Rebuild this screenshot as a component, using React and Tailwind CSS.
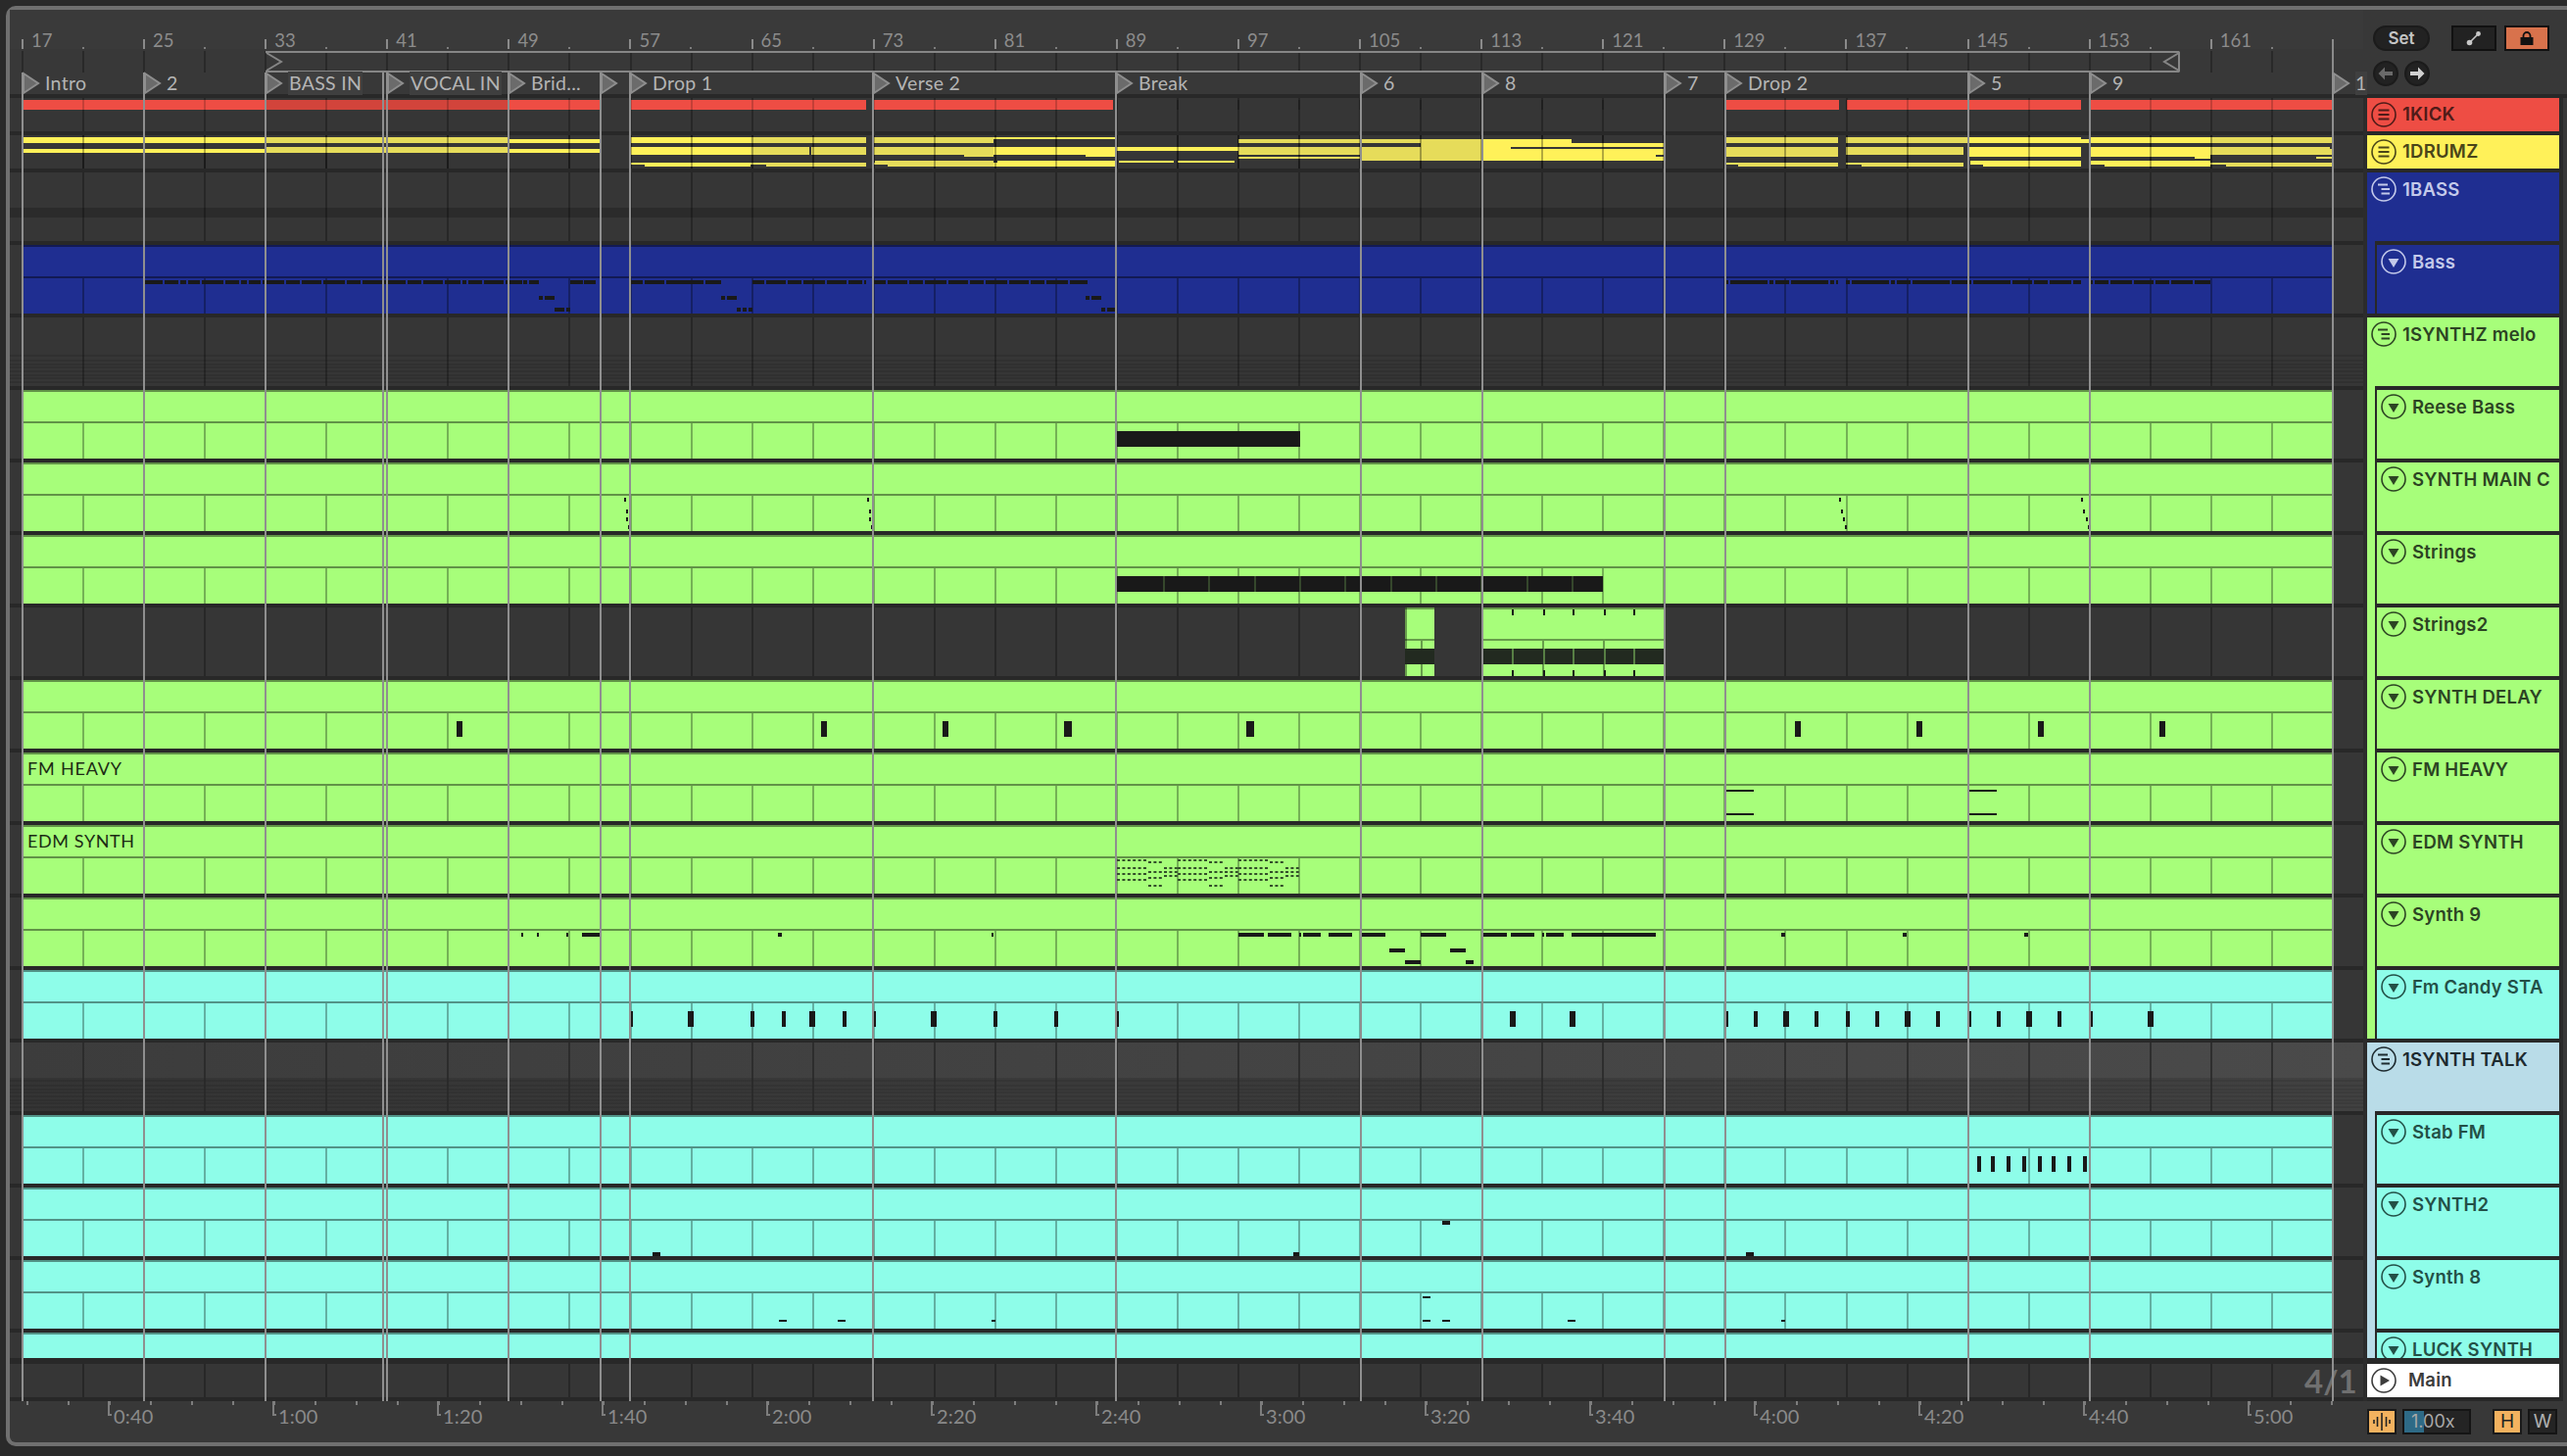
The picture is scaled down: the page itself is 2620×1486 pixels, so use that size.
import { Fragment } from "react";

const BAR = 62.05;
const gridXs = Array.from({ length: 38 }, (_, i) => Math.round(23 + BAR * i));
const locators = [
  { x: 23, name: "Intro" },
  { x: 147, name: "2" },
  { x: 271, name: "BASS IN", tint: true },
  { x: 391, name: "", hidden: true },
  { x: 395, name: "VOCAL IN", tint: true },
  { x: 519, name: "Brid..." },
  { x: 613, name: "" },
  { x: 643, name: "Drop 1" },
  { x: 891, name: "Verse 2" },
  { x: 1139, name: "Break" },
  { x: 1389, name: "6" },
  { x: 1513, name: "8" },
  { x: 1699, name: "7" },
  { x: 1761, name: "Drop 2" },
  { x: 2009, name: "5" },
  { x: 2133, name: "9" },
  { x: 2381, name: "1" },
];
const barLabels = [17, 25, 33, 41, 49, 57, 65, 73, 81, 89, 97, 105, 113, 121, 129, 137, 145, 153, 161];
const timeLabels = ["0:40", "1:00", "1:20", "1:40", "2:00", "2:20", "2:40", "3:00", "3:20", "3:40", "4:00", "4:20", "4:40", "5:00"];

// [x1, x2, y1, y2] in page pixels
const yellowBright = [
  [24, 271, 140, 146], [24, 271, 152, 156], [519, 612, 142, 146], [519, 612, 152, 156],
  [644, 766, 140, 146], [644, 766, 150, 158], [644, 658, 166, 168], [658, 766, 166, 170],
  [1014, 1139, 140, 142], [1014, 1139, 150, 158], [1108, 1139, 158, 160], [1014, 1030, 166, 170], [1018, 1139, 164, 166], [1030, 1139, 166, 170],
  [1139, 1264, 150, 154], [1142, 1198, 164, 166], [1202, 1260, 164, 166],
  [1513, 1604, 142, 164], [1604, 1699, 146, 164],
  [2010, 2124, 140, 146], [2010, 2124, 150, 160], [2011, 2024, 164, 168], [2024, 2124, 164, 170], [2124, 2133, 142, 146],
  [2134, 2256, 140, 146], [2134, 2240, 150, 160], [2240, 2256, 150, 162], [2134, 2148, 164, 168], [2148, 2256, 164, 170],
];
const yellowDim = [
  [271, 519, 140, 146], [271, 519, 150, 156],
  [766, 884, 140, 146], [766, 826, 150, 158], [828, 884, 150, 158], [766, 782, 166, 168], [782, 884, 166, 170],
  [891, 1014, 140, 146], [891, 984, 150, 158], [984, 1014, 150, 160], [891, 906, 166, 168], [893, 906, 164, 166], [906, 1014, 164, 170],
  [1264, 1389, 142, 146], [1264, 1389, 150, 158], [1264, 1389, 160, 162],
  [1390, 1450, 142, 146], [1390, 1450, 150, 164], [1450, 1513, 142, 164],
  [1761, 1876, 140, 146], [1761, 1876, 150, 160], [1761, 1774, 166, 168], [1774, 1876, 166, 170],
  [1884, 2009, 140, 146], [1884, 2004, 150, 158], [1884, 1900, 166, 168], [1900, 2004, 166, 170],
  [2256, 2380, 140, 146], [2256, 2378, 150, 158], [2256, 2272, 166, 168], [2272, 2380, 166, 170], [2364, 2380, 160, 162], [2378, 2380, 152, 158],
];
const yellowCuts = [[1542, 1698, 150, 152], [1690, 1699, 158, 160]];

// [x1, x2] for the three bass note rows
const bassHigh = [
  [148, 166], [168, 182], [184, 190], [192, 204], [206, 228], [230, 244], [246, 252], [254, 266], [268, 270], [272, 290], [292, 306], [308, 328],
  [330, 352], [354, 368], [370, 414], [416, 430], [432, 452], [454, 470], [472, 476], [478, 492], [494, 514], [516, 533], [534, 538], [540, 550],
  [582, 595], [596, 608], [644, 656], [658, 678], [680, 718], [720, 736], [768, 780], [782, 802], [804, 818], [820, 842], [844, 864], [866, 880],
  [882, 884], [892, 904], [906, 926], [928, 942], [944, 966], [968, 988], [990, 1004], [1006, 1028], [1030, 1050], [1052, 1066], [1068, 1090], [1092, 1110],
  [1762, 1764], [1766, 1804], [1806, 1810], [1812, 1826], [1828, 1866], [1868, 1872], [1874, 1876], [1884, 1888], [1890, 1928], [1930, 1934], [1936, 1950],
  [1952, 1990], [1992, 2012], [2014, 2052], [2054, 2074], [2076, 2090], [2092, 2114], [2116, 2124], [2134, 2136], [2138, 2152], [2154, 2176], [2178, 2198],
  [2200, 2214], [2216, 2238], [2240, 2256],
];
const bassMid = [[550, 554], [556, 566], [736, 740], [742, 752], [1108, 1112], [1114, 1124]];
const bassLow = [[566, 576], [578, 582], [752, 756], [758, 762], [764, 768], [1124, 1128], [1130, 1138]];

const synth9High = [
  [532, 534], [548, 550], [578, 580], [594, 612], [794, 798], [1012, 1014], [1264, 1290], [1294, 1318], [1326, 1328], [1330, 1348], [1356, 1380], [1390, 1414],
  [1450, 1476], [1514, 1538], [1542, 1566], [1574, 1576], [1578, 1596], [1604, 1690], [1818, 1822], [1942, 1946], [2066, 2070],
];
const candyNotes = [
  [644, 646], [702, 708], [766, 770], [798, 802], [826, 832], [860, 864], [892, 894], [950, 956], [1014, 1018], [1076, 1080], [1139, 1142], [1541, 1547], [1602, 1608],
  [1762, 1764], [1790, 1794], [1820, 1826], [1852, 1856], [1884, 1888], [1914, 1918], [1944, 1950], [1976, 1980], [2010, 2012], [2038, 2042], [2068, 2074], [2100, 2104], [2134, 2136], [2192, 2198],
];
const stabNotes = [[2018, 2022], [2032, 2036], [2048, 2052], [2064, 2068], [2080, 2084], [2094, 2098], [2110, 2114], [2126, 2130]];
const delayNotes = [[466, 472], [838, 844], [962, 968], [1086, 1094], [1272, 1280], [1832, 1838], [1956, 1962], [2080, 2086], [2204, 2210]];
const ticks = [1543, 1575, 1605, 1637, 1667];
const stringLines = Array.from({ length: 10 }, (_, i) => Math.round(1187 + 46.35 * i));
const stripes = [2, 7, 11, 14, 18, 22, 25, 29];

const Rects = ({ items, fill, opacity }) =>
  items.map(([a, b, c, d], i) => <rect key={i} x={a} y={c} width={b - a} height={d - c} fill={fill} opacity={opacity} />);

const Notes = ({ items, y1, y2 }) => <Rects items={items.map(([a, b]) => [a, b, y1, y2])} fill="#191919" />;

const Grid = ({ y, h, fill = "#272727", opacity }) =>
  gridXs.map((x) => <rect key={x} x={x - 1} y={y} width="2" height={h} fill={fill} opacity={opacity} />);

// one arrangement row, drawn in page coordinates
const Row = ({ y, h = 70, bg = "bg-[#363636]", children }) => (
  <div className={bg}>
    <svg className="block" width="2402" height={h} viewBox={`10 ${y} 2402 ${h}`}>
      {children}
    </svg>
  </div>
);

const Clip = ({ y, h = 70, fill, x1 = 24, x2 = 2380 }) => (
  <>
    <rect x={x1} y={y} width={x2 - x1} height={h} fill={fill} />
    <rect x={x1} y={y} width={x2 - x1} height="2" fill="#000" opacity="0.42" />
    {h > 34 && <rect x={x1} y={y + 32} width={x2 - x1} height="2" fill="#000" opacity="0.42" />}
    {h > 34 && gridXs.filter((x) => x > x1 && x < x2).map((x) => <rect key={x} x={x - 1} y={y + 34} width="2" height={h - 34} fill="#000" opacity="0.3" />)}
  </>
);

const Sep = ({ h = "h-1" }) => <div className={`${h} bg-[#282828]`} />;
const GREEN = "#a7fe7a";
const CYAN = "#8efde9";

const Timeline = () => (
  <div className="relative w-[2402px]">
    <div className="h-[86px] bg-[#383838] relative">
      <div className="h-[40px] bg-[#3a3a3a] flex items-end pl-[12px]">
        {barLabels.map((n) => (
          <div key={n} className="w-[124.1px] shrink-0 h-[22px] flex">
            <div className="w-[62px] h-full flex">
              <div className="w-[2px] h-[10px] mt-[12px] bg-[#8a8a8a]" />
              <span className="pl-[8px] pt-[1px] text-[18.5px] leading-[24px] text-[#8c8c8c]">{n}</span>
            </div>
            <div className="w-[2px] h-[2px] mt-[20px] bg-[#7d7d7d]" />
          </div>
        ))}
      </div>
      {/* loop brace and ruler ticks */}
      <svg className="absolute left-0 top-0" width="2402" height="86" viewBox="10 10 2402 86">
        <Rects items={gridXs.map((x) => [x - 1, x + 1, 52, 74])} fill="#292929" />
        <rect x="2380" y="40" width="2" height="34" fill="#8a8a8a" />
        <rect x="271" y="52" width="1953" height="2" fill="#868686" />
        <rect x="271" y="72" width="1953" height="2" fill="#868686" />
        <path d="M272 54 L287 63 L272 72" fill="none" stroke="#868686" strokeWidth="2" />
        <path d="M2224 54 L2209 63 L2224 72 Z" fill="none" stroke="#868686" strokeWidth="2" />
      </svg>
      {locators.map((l) => (
        <Fragment key={l.x}>
          {!l.hidden && (
            <svg className="absolute top-[63px]" style={{ left: l.x - 10 }} width="18" height="24" viewBox="0 0 18 24">
              <path d="M1 2 L16 12 L1 22 Z" fill="#6b6b6b" stroke="#8e8e8e" strokeWidth="2" />
            </svg>
          )}
          {l.name && (
            <span
              className={`absolute top-[63px] h-[24px] text-[19.5px] leading-[24px] tracking-[0.3px] text-[#b4b4b4] whitespace-nowrap ${l.tint ? "bg-[#3f3f3f] px-[1px]" : ""} ${l.name === "1" ? "bg-[#3f3f3f]" : ""}`}
              style={{ left: l.x - 10 + 23 }}
            >
              {l.name}
            </span>
          )}
        </Fragment>
      ))}
    </div>
    <Sep />

    <Row y={100} h={34}>
      <Grid y={100} h={34} />
      <Rects items={[[24, 612, 102, 112], [644, 884, 102, 112], [891, 1136, 102, 112], [1761, 1877, 102, 112], [1885, 2124, 102, 112], [2133, 2380, 102, 112]]} fill="#ee4d44" />
      <rect x="271" y="102" width="248" height="10" fill="#d2443b" />
      <Grid y={102} h={10} fill="#000" opacity="0.18" />
    </Row>
    <Sep />
    <Row y={138} h={34}>
      <Grid y={138} h={34} />
      <Rects items={yellowBright} fill="#fff159" />
      <Rects items={yellowDim} fill="#e6dc5a" />
      <Rects items={yellowCuts} fill="#363636" />
      <Grid y={138} h={34} fill="#000" opacity="0.3" />
    </Row>
    <Sep />
    <Row y={176}>
      <Grid y={176} h={70} />
      <rect x="10" y="212" width="2402" height="10" fill="#000" opacity="0.2" />
    </Row>
    <Sep />
    <Row y={250}>
      <Grid y={250} h={70} />
      <Clip y={250} fill="#1f2e91" />
      <Notes items={bassHigh} y1={286} y2={290} />
      <Notes items={bassMid} y1={302} y2={306} />
      <Notes items={bassLow} y1={314} y2={318} />
    </Row>
    <Sep />
    <Row y={324}>
      <Grid y={324} h={70} />
      {stripes.map((s) => (
        <rect key={s} x="10" y={360 + s} width="2402" height="2" fill="#000" opacity="0.1" />
      ))}
    </Row>
    <Sep />
    <Row y={398}>
      <Grid y={398} h={70} />
      <Clip y={398} fill={GREEN} />
      <Notes items={[[1140, 1327]]} y1={440} y2={456} />
    </Row>
    <Sep />
    <Row y={472}>
      <Grid y={472} h={70} />
      <Clip y={472} fill={GREEN} />
      {[[637, 639, 639, 641], [885, 887, 887, 889], [1877, 1879, 1881, 1883], [2124, 2126, 2129, 2131]].map((g) =>
        g.map((x, i) => <rect key={`${x}-${i}`} x={x} y={[508, 520, 528, 536][i]} width="2" height="4" fill="#191919" />)
      )}
    </Row>
    <Sep />
    <Row y={546}>
      <Grid y={546} h={70} />
      <Clip y={546} fill={GREEN} />
      <Notes items={[[1140, 1636]]} y1={588} y2={604} />
      {stringLines.map((x) => (
        <rect key={x} x={x} y="588" width="2" height="16" fill={GREEN} opacity="0.2" />
      ))}
    </Row>
    <Sep />
    <Row y={620}>
      <Grid y={620} h={70} />
      <rect x="1434" y="620" width="30" height="70" fill={GREEN} />
      <rect x="1513" y="620" width="185" height="70" fill={GREEN} />
      <Rects items={[[1434, 1464, 620, 622], [1513, 1698, 620, 622], [1434, 1464, 652, 654], [1513, 1698, 652, 654], [1434, 1436, 620, 690], [1450, 1452, 654, 690], [1574, 1576, 654, 690], [1636, 1638, 654, 690]]} fill="#000" opacity="0.38" />
      <Rects items={[[1434, 1464, 662, 678], [1513, 1698, 662, 678]]} fill="#222a20" />
      {ticks.map((x) => (
        <Fragment key={x}>
          <rect x={x} y="662" width="2" height="16" fill={GREEN} opacity="0.4" />
          <rect x={x} y="622" width="2" height="6" fill="#191919" />
          <rect x={x} y="684" width="2" height="6" fill="#191919" />
        </Fragment>
      ))}
    </Row>
    <Sep />
    <Row y={694}>
      <Clip y={694} fill={GREEN} />
      <Notes items={delayNotes} y1={736} y2={752} />
    </Row>
    <Sep />
    <Row y={768}>
      <Clip y={768} fill={GREEN} />
      <Notes items={[[1762, 1790], [2010, 2038]]} y1={806} y2={808} />
      <Notes items={[[1762, 1790], [2010, 2038]]} y1={830} y2={832} />
      <text x="28" y="791" fontSize="18" letterSpacing="0.8" fill="#1c2b14">FM HEAVY</text>
    </Row>
    <Sep />
    <Row y={842}>
      <Clip y={842} fill={GREEN} />
      {[1140, 1202, 1264].map((b) => (
        <Fragment key={b}>
          {[878, 886, 892, 898].map((y) => (
            <line key={y} x1={b} x2={b + 30} y1={y} y2={y} stroke="#33502a" strokeWidth="2" strokeDasharray="3 2.4" />
          ))}
          {[880, 890, 896, 904].map((y) => (
            <line key={y} x1={b + 32} x2={b + 46} y1={y} y2={y} stroke="#33502a" strokeWidth="2" strokeDasharray="3 2.4" />
          ))}
          {[886, 890, 894].map((y) => (
            <line key={y} x1={b + 48} x2={b + 62} y1={y} y2={y} stroke="#33502a" strokeWidth="2" strokeDasharray="3 2.4" />
          ))}
        </Fragment>
      ))}
      <text x="28" y="865" fontSize="18" letterSpacing="0.6" fill="#1c2b14">EDM SYNTH</text>
    </Row>
    <Sep />
    <Row y={916}>
      <Clip y={916} fill={GREEN} />
      <Notes items={synth9High} y1={952} y2={956} />
      <Notes items={[[1418, 1434], [1480, 1496]]} y1={968} y2={972} />
      <Notes items={[[1434, 1450], [1496, 1504]]} y1={980} y2={984} />
    </Row>
    <Sep />
    <Row y={990}>
      <Clip y={990} fill={CYAN} />
      <Notes items={candyNotes} y1={1032} y2={1048} />
    </Row>
    <Sep />
    <Row y={1064} bg="bg-gradient-to-r from-[#3c3c3c] to-[#4a4a4a]">
      <rect x="10" y="1100" width="2402" height="34" fill="#000" opacity="0.12" />
      {stripes.map((s) => (
        <rect key={s} x="10" y={1100 + s} width="2402" height="2" fill="#000" opacity="0.08" />
      ))}
      <Grid y={1064} h={70} fill="#282828" opacity="0.8" />
    </Row>
    <Sep />
    <Row y={1138}>
      <Clip y={1138} fill={CYAN} />
      <Notes items={stabNotes} y1={1180} y2={1196} />
    </Row>
    <Sep />
    <Row y={1212}>
      <Clip y={1212} fill={CYAN} />
      <Notes items={[[666, 674], [1320, 1326], [1782, 1790]]} y1={1278} y2={1282} />
      <Notes items={[[1472, 1480]]} y1={1246} y2={1250} />
    </Row>
    <Sep />
    <Row y={1286}>
      <Clip y={1286} fill={CYAN} />
      <Notes items={[[795, 803], [855, 863], [1012, 1016], [1452, 1460], [1472, 1480], [1600, 1608], [1818, 1822]]} y1={1347} y2={1349} />
      <Notes items={[[1452, 1460]]} y1={1323} y2={1325} />
    </Row>
    <Sep />
    <Row y={1360} h={26}>
      <rect x="24" y="1360" width="2356" height="26" fill={CYAN} />
      <rect x="24" y="1360" width="2356" height="2" fill="#000" opacity="0.42" />
    </Row>
    <Sep h="h-[6px]" />
    <div className="relative">
      <Row y={1392} h={34}>
        <Grid y={1392} h={34} />
      </Row>
      <span className="absolute left-[2342px] top-0 h-[34px] leading-[34px] text-[33px] font-bold text-[#707070]">4/1</span>
    </div>
    <Sep />

    {/* time ruler */}
    <div className="h-[42px] relative">
      <svg className="absolute left-0 top-0" width="2402" height="8" viewBox="10 1430 2402 8">
        {Array.from({ length: 57 }, (_, i) => (
          <rect key={i} x={27 + 42 * i} y="1430" width="2" height="4" fill="#7d7d7d" />
        ))}
      </svg>
      <div className="flex pl-[100px]">
        {timeLabels.map((t) => (
          <div key={t} className="w-[168px] shrink-0 flex">
            <div className="h-[15px] w-[4px] border-l-2 border-b-2 border-[#7d7d7d]" />
            <span className="pl-[2px] pt-[5px] text-[20px] leading-[20px] tracking-[0.2px] text-[#8a8a8a]">{t}</span>
          </div>
        ))}
      </div>
    </div>

    {/* locator lines lie over the clips */}
    <svg className="absolute left-0 top-[64px] pointer-events-none" width="2402" height="1356" viewBox="10 74 2402 1356">
      {locators.map((l) => (
        <rect key={l.x} x={l.x - 1} y="74" width="2" height="1356" fill="#8f8f8f" />
      ))}
    </svg>
  </div>
);

const FoldIcon = ({ kind }) => (
  <svg className="shrink-0" width="26" height="26" viewBox="0 0 26 26" fill="none">
    <circle cx="13" cy="13" r="12" stroke="currentColor" strokeWidth="1.6" />
    {kind === "lines" && (
      <path d="M7.500 8.500H18.500M7.500 13H18.500M7.500 17.500H18.500" stroke="currentColor" strokeWidth="2" />
    )}
    {kind === "group" && (
      <path d="M7 8.500H17M10.500 13H19M10.500 17.500H19" stroke="currentColor" strokeWidth="2" />
    )}
    {kind === "down" && <path d="M7.500 10H18.500L13 19Z" fill="currentColor" />}
    {kind === "play" && <path d="M9.500 7.500L19 13L9.500 18.500Z" fill="currentColor" />}
  </svg>
);

const NAME_FONT = "font-[Inter,sans-serif] text-[18.5px] font-semibold tracking-[0.25px] whitespace-nowrap";

const HeaderItem = ({ name, kind = "lines", className }) => (
  <div className={`h-[34px] flex items-center pl-[4px] gap-[6px] ${NAME_FONT} ${className}`}>
    <FoldIcon kind={kind} />
    <span>{name}</span>
  </div>
);

const GroupHead = ({ name, kind = "group", className = "" }) => (
  <div className={`flex pt-[4px] pl-[4px] gap-[6px] leading-[26px] ${NAME_FONT} ${className}`}>
    <FoldIcon kind={kind} />
    <span>{name}</span>
  </div>
);

const Child = ({ name, bg, text, h = "h-[70px]" }) => (
  <div className={`border-t-4 border-l-2 border-[#282828] ${bg} ${text} ${h} overflow-hidden`}>
    <div className={`flex pt-[4px] pl-[4px] gap-[6px] leading-[26px] ${NAME_FONT}`}>
      <FoldIcon kind="down" />
      <span>{name}</span>
    </div>
  </div>
);

const TrackList = () => (
  <div className="w-[196px] overflow-hidden">
    <HeaderItem name="1KICK" className="bg-[#ee4d44] text-[#4f1b18]" />
    <Sep />
    <HeaderItem name="1DRUMZ" className="bg-[#fff159] text-[#4a4519]" />
    <Sep />
    <div className="bg-[#1f2e91] text-[#c3c9ea]">
      <GroupHead name="1BASS" className="h-[70px]" />
      <div className="pl-[8px]">
        <Child name="Bass" bg="bg-[#1f2e91]" text="text-[#c3c9ea]" h="h-[74px]" />
      </div>
    </div>
    <Sep />
    <div className="bg-[#a7fe7a] text-[#2c4423]">
      <GroupHead name="1SYNTHZ melo" className="h-[70px]" />
      <div className="pl-[8px]">
        {["Reese Bass", "SYNTH MAIN C", "Strings", "Strings2", "SYNTH DELAY", "FM HEAVY", "EDM SYNTH", "Synth 9"].map((t) => (
          <Child key={t} name={t} bg="bg-[#a7fe7a]" text="text-[#2c4423]" h="h-[74px]" />
        ))}
        <Child name="Fm Candy STA" bg="bg-[#8efde9]" text="text-[#235047]" h="h-[74px]" />
      </div>
    </div>
    <Sep />
    <div className="bg-[#b9dce8] h-[322px] overflow-hidden">
      <GroupHead name="1SYNTH TALK" className="h-[70px] text-[#1d2a2f]" />
      <div className="pl-[8px]">
        {["Stab FM", "SYNTH2", "Synth 8"].map((t) => (
          <Child key={t} name={t} bg="bg-[#8efde9]" text="text-[#235047]" h="h-[74px]" />
        ))}
        <Child name="LUCK SYNTH" bg="bg-[#8efde9]" text="text-[#235047]" h="h-[30px]" />
      </div>
    </div>
    <Sep h="h-[6px]" />
    <div className={`h-[34px] bg-white flex items-center pl-[4px] gap-[12px] text-[#3c3c3c] ${NAME_FONT}`}>
      <FoldIcon kind="play" />
      <span>Main</span>
    </div>
    <Sep />
  </div>
);

const RightColumn = () => (
  <div className="w-[208px] shrink-0">
    <div className="h-[86px] pl-[10px] pt-[16px]">
      <div className="flex items-center">
        <div className="w-[58px] h-[26px] rounded-full bg-[#222] border-2 border-[#1b1b1b] text-[#c4c4c4] text-[17px] font-[Inter,sans-serif] font-semibold leading-[22px] text-center">Set</div>
        <div className="ml-[22px] w-[46px] h-[26px] bg-[#222] border-2 border-[#111] flex items-center justify-center">
          <svg width="16" height="16" viewBox="0 0 16 16">
            <path d="M3.500 12.500L12.500 3.500" stroke="#c8c8c8" strokeWidth="1.6" />
            <circle cx="3.500" cy="12.500" r="2.800" fill="#c8c8c8" />
            <circle cx="12.500" cy="3.500" r="2.400" fill="#c8c8c8" />
          </svg>
        </div>
        <div className="ml-[8px] w-[46px] h-[26px] bg-[#d8724c] border-2 border-[#111] flex items-center justify-center">
          <svg width="16" height="16" viewBox="0 0 16 16">
            <path d="M4.500 8V5.500a3.500 3.500 0 0 1 7 0V8" fill="none" stroke="#111" strokeWidth="1.800" />
            <rect x="1.500" y="7" width="13" height="8" fill="#111" />
          </svg>
        </div>
      </div>
      <div className="flex gap-[6px] mt-[10px]">
        <div className="w-[26px] h-[26px] rounded-full bg-[#222] border-2 border-[#1b1b1b] flex items-center justify-center">
          <svg width="16" height="14" viewBox="0 0 16 14">
            <path d="M7 0.500L0.500 7L7 13.500V9H15V5H7Z" fill="#6a6a6a" />
          </svg>
        </div>
        <div className="w-[26px] h-[26px] rounded-full bg-[#222] border-2 border-[#1b1b1b] flex items-center justify-center">
          <svg width="16" height="14" viewBox="0 0 16 14">
            <path d="M9 0.500L15.500 7L9 13.500V9H1V5H9Z" fill="#d0d0d0" />
          </svg>
        </div>
      </div>
    </div>
    <Sep />
    <div className="flex">
      <div className="w-1 bg-[#2c2c2c]" />
      <TrackList />
      <div className="w-1 bg-[#2a2a2a]" />
    </div>
    <div className="h-[42px] pl-[4px] pt-[8px] flex">
      <div className="w-[30px] h-[26px] bg-[#f3b25f] border-2 border-[#1a1a1a] flex items-center justify-center">
        <svg width="20" height="18" viewBox="0 0 20 18">
          <path d="M2 7v4M5.500 4v10M10 0v18M14.500 4v10M18 7v4" stroke="#222" strokeWidth="1.600" />
        </svg>
      </div>
      <div className="relative ml-[6px] w-[70px] h-[26px] bg-[#242424] border-2 border-[#151515] font-[Inter,sans-serif] text-[18px] leading-[22px] text-[#a8a8a8] pl-[7px]">
        <div className="absolute left-0 top-0 h-full w-[20px] bg-[#2e6a86]" />
        <span className="relative">1.00x</span>
      </div>
      <div className="ml-[22px] w-[30px] h-[26px] bg-[#f3b25f] border-2 border-[#1a1a1a] font-[Inter,sans-serif] text-[19px] leading-[22px] text-center text-[#222]">H</div>
      <div className="ml-[6px] w-[30px] h-[26px] bg-[#242424] border-2 border-[#151515] font-[Inter,sans-serif] text-[19px] leading-[22px] text-center text-[#b0b0b0]">W</div>
    </div>
  </div>
);

export default function App() {
  return (
    <div className="w-[2620px] h-[1486px] overflow-hidden bg-[#2a2a2a] pt-[6px] pl-[6px] font-[Lato,sans-serif]">
      <div className="flex w-[2614px] h-[1470px] bg-[#383838] border-4 border-r-0 border-[#707070] rounded-l-[10px]">
        <Timeline />
        <RightColumn />
      </div>
    </div>
  );
}
